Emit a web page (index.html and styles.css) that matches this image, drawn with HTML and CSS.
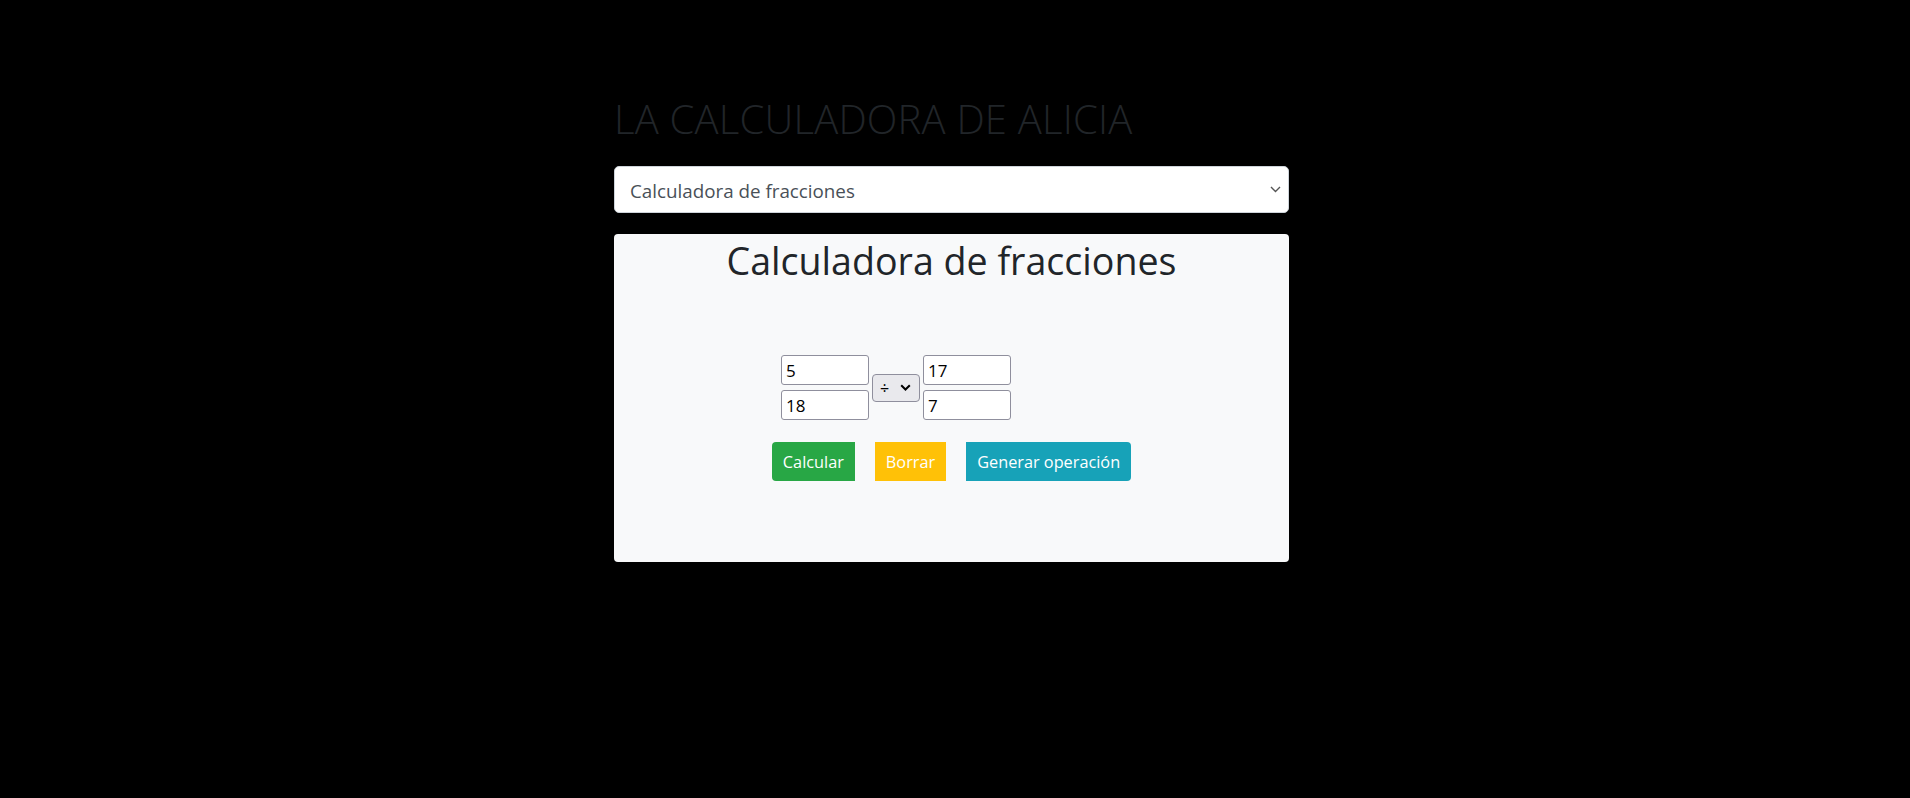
FILE: index.html
```html
<!DOCTYPE html>
<html lang="es">
<head>
<meta charset="utf-8">
<title>La calculadora de Alicia</title>
<link rel="stylesheet" href="styles.css">
</head>
<body>
<main class="page">
  <h1 class="app-title">LA CALCULADORA DE ALICIA</h1>
  <select class="mode-select">
    <option>Calculadora de fracciones</option>
  </select>
  <section class="card">
    <h2 class="card-title">Calculadora de fracciones</h2>
    <div class="fraction-row">
      <div class="fraction">
        <input class="num" type="text" value="5">
        <input class="num" type="text" value="18">
      </div>
      <select class="op-select">
        <option>÷</option>
      </select>
      <div class="fraction">
        <input class="num" type="text" value="17">
        <input class="num" type="text" value="7">
      </div>
    </div>
    <div class="actions">
      <button class="btn btn-first btn-green">Calcular</button>
      <button class="btn btn-mid btn-yellow">Borrar</button>
      <button class="btn btn-last btn-teal">Generar operación</button>
    </div>
  </section>
</main>
</body>
</html>
```
FILE: styles.css
```css
html, body {
  margin: 0;
  padding: 0;
  background: #000;
}

body {
  font-family: "Segoe UI", "Open Sans", sans-serif;
  color: #212529;
}

.page {
  width: 675px;
  margin-left: 614px;
  padding-top: 94px;
  display: flex;
  flex-direction: column;
}

.app-title {
  margin: 0;
  font-size: 40px;
  line-height: 49px;
  font-weight: 300;
  color: #212529;
  letter-spacing: 0.2px;
}

.mode-select {
  margin-top: 23px;
  width: 100%;
  height: 47px;
  box-sizing: border-box;
  padding: 3px 30px 0 15px;
  font-family: inherit;
  font-size: 18.8px;
  color: #495057;
  background-color: #fff;
  border: 1px solid #ced4da;
  border-radius: 5px;
  appearance: none;
  -webkit-appearance: none;
  background-image: url("data:image/svg+xml,%3Csvg xmlns='http://www.w3.org/2000/svg' width='11' height='7' viewBox='0 0 11 7'%3E%3Cpath d='M1 1l4.5 4.5L10 1' fill='none' stroke='%23555' stroke-width='1.4'/%3E%3C/svg%3E");
  background-repeat: no-repeat;
  background-position: right 7px center;
  background-size: 11px 7px;
}

.card {
  margin-top: 21px;
  height: 328px;
  box-sizing: border-box;
  padding-top: 5px;
  background: #f8f9fa;
  border-radius: 4px;
  display: flex;
  flex-direction: column;
}

.card-title {
  margin: 0;
  font-size: 37.6px;
  line-height: 44px;
  font-weight: 400;
  text-align: center;
  color: #212529;
}

.fraction-row {
  margin-top: 72px;
  margin-left: 167px;
  display: flex;
  align-items: center;
  gap: 3px;
}

.fraction {
  display: flex;
  flex-direction: column;
  gap: 5px;
}

.num {
  width: 88px;
  height: 30px;
  box-sizing: border-box;
  margin: 0;
  padding: 0 4px;
  font-family: inherit;
  font-size: 17px;
  color: #000;
  background: #fff;
  border: 1px solid #8f8f9d;
  border-radius: 3px;
  outline: none;
}

.op-select {
  width: 48px;
  height: 28px;
  box-sizing: border-box;
  margin: 0;
  padding: 0 0 0 7px;
  font-family: inherit;
  font-size: 16px;
  color: #000;
  background-color: #e9e9ed;
  border: 1px solid #8f8f9d;
  border-radius: 4px;
  appearance: none;
  -webkit-appearance: none;
  background-image: url("data:image/svg+xml,%3Csvg xmlns='http://www.w3.org/2000/svg' width='11' height='7' viewBox='0 0 11 7'%3E%3Cpath d='M1.2 1.2l4.3 4.3 4.3-4.3' fill='none' stroke='%23000' stroke-width='2'/%3E%3C/svg%3E");
  background-repeat: no-repeat;
  background-position: right 8px center;
  background-size: 11px 7px;
}

.actions {
  margin-top: 22px;
  display: flex;
  justify-content: center;
  gap: 20px;
}

.btn {
  height: 39px;
  padding: 0 11px;
  margin: 0;
  border: none;
  font-family: inherit;
  font-size: 16.3px;
  color: #fff;
  cursor: pointer;
}

.btn-first { border-radius: 4px 0 0 4px; }
.btn-mid { border-radius: 0; }
.btn-last { border-radius: 0 4px 4px 0; }

.btn-green { background: #28a745; }
.btn-yellow { background: #ffc107; }
.btn-teal { background: #17a2b8; }
```
